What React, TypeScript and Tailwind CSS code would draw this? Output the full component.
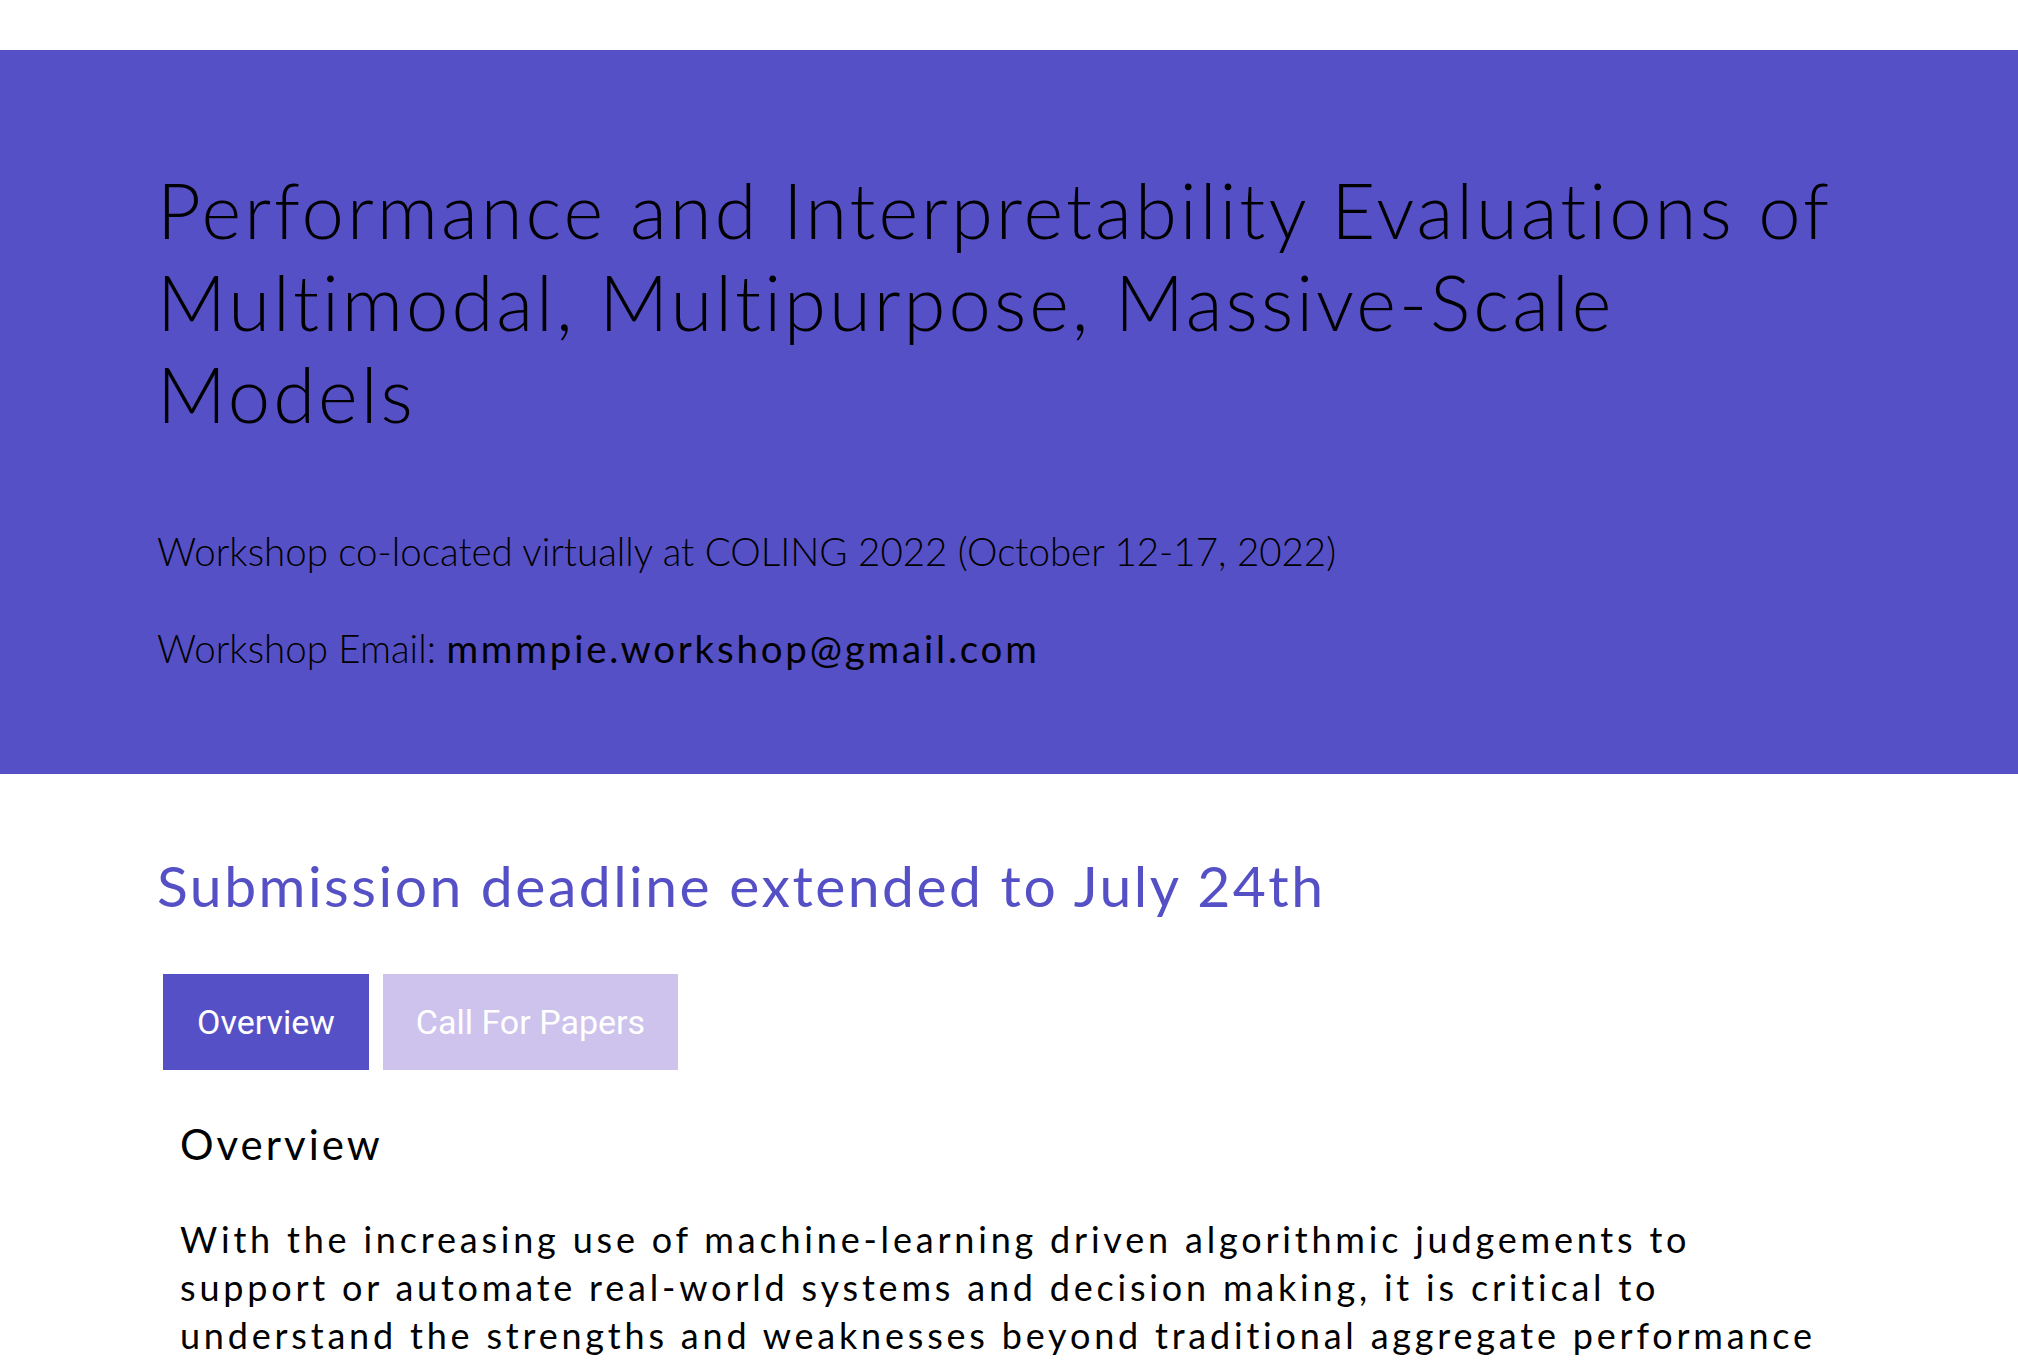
import { useState } from 'react'

const tabs = ['Overview', 'Call For Papers']

const App = () => {
  const [active, setActive] = useState('Overview')

  return (
    <div className="min-h-screen bg-white pt-[50px] text-black font-['Lato',sans-serif]">
      <header className="bg-[#5650c6] px-[157px] pt-[114px] pb-[96px]">
        <h1 className="max-w-[1690px] text-[76px] leading-[92px] font-light tracking-[3px]">
          Performance and Interpretability Evaluations of Multimodal, Multipurpose, Massive-Scale Models
        </h1>
        <p className="mt-[81px] text-[38.5px] leading-[60px] font-light">
          Workshop co-located virtually at COLING 2022 (October 12-17, 2022)
        </p>
        <p className="mt-[37px] text-[38.5px] leading-[60px] font-light">
          Workshop Email: <span className="font-normal tracking-[2.8px]">mmmpie.workshop@gmail.com</span>
        </p>
      </header>

      <main className="px-[157px]">
        <h2 className="mt-[76px] text-[57px] leading-[70px] tracking-[2.5px] text-[#5650c6]">
          Submission deadline extended to July 24th
        </h2>

        <div className="mt-[54px] ml-[6px] flex gap-[14px] font-['Roboto',sans-serif]">
          {tabs.map((t) => (
            <button
              key={t}
              onClick={() => setActive(t)}
              className={
                active === t
                  ? 'h-[96px] px-[34px] text-[34px] text-white bg-[#5650c6]'
                  : 'h-[96px] px-[33px] text-[34px] text-white bg-[#cdc3ec]'
              }
            >
              {t}
            </button>
          ))}
        </div>

        <section className="px-[23px] pb-20">
          <h3 className="mt-[49px] text-[42px] leading-[50px] tracking-[3px]">Overview</h3>
          <p className="mt-[46px] max-w-[1655px] text-[36px] leading-[48px] tracking-[3.8px]">
            With the increasing use of machine-learning driven algorithmic judgements to support or automate
            real-world systems and decision making, it is critical to understand the strengths and weaknesses
            beyond traditional aggregate performance metrics. This workshop brings together researchers working
            on the evaluation and interpretation of large multimodal and multipurpose models, with the goal of
            developing methods that look past single benchmark numbers.
          </p>
        </section>
      </main>
    </div>
  )
}

export default App
